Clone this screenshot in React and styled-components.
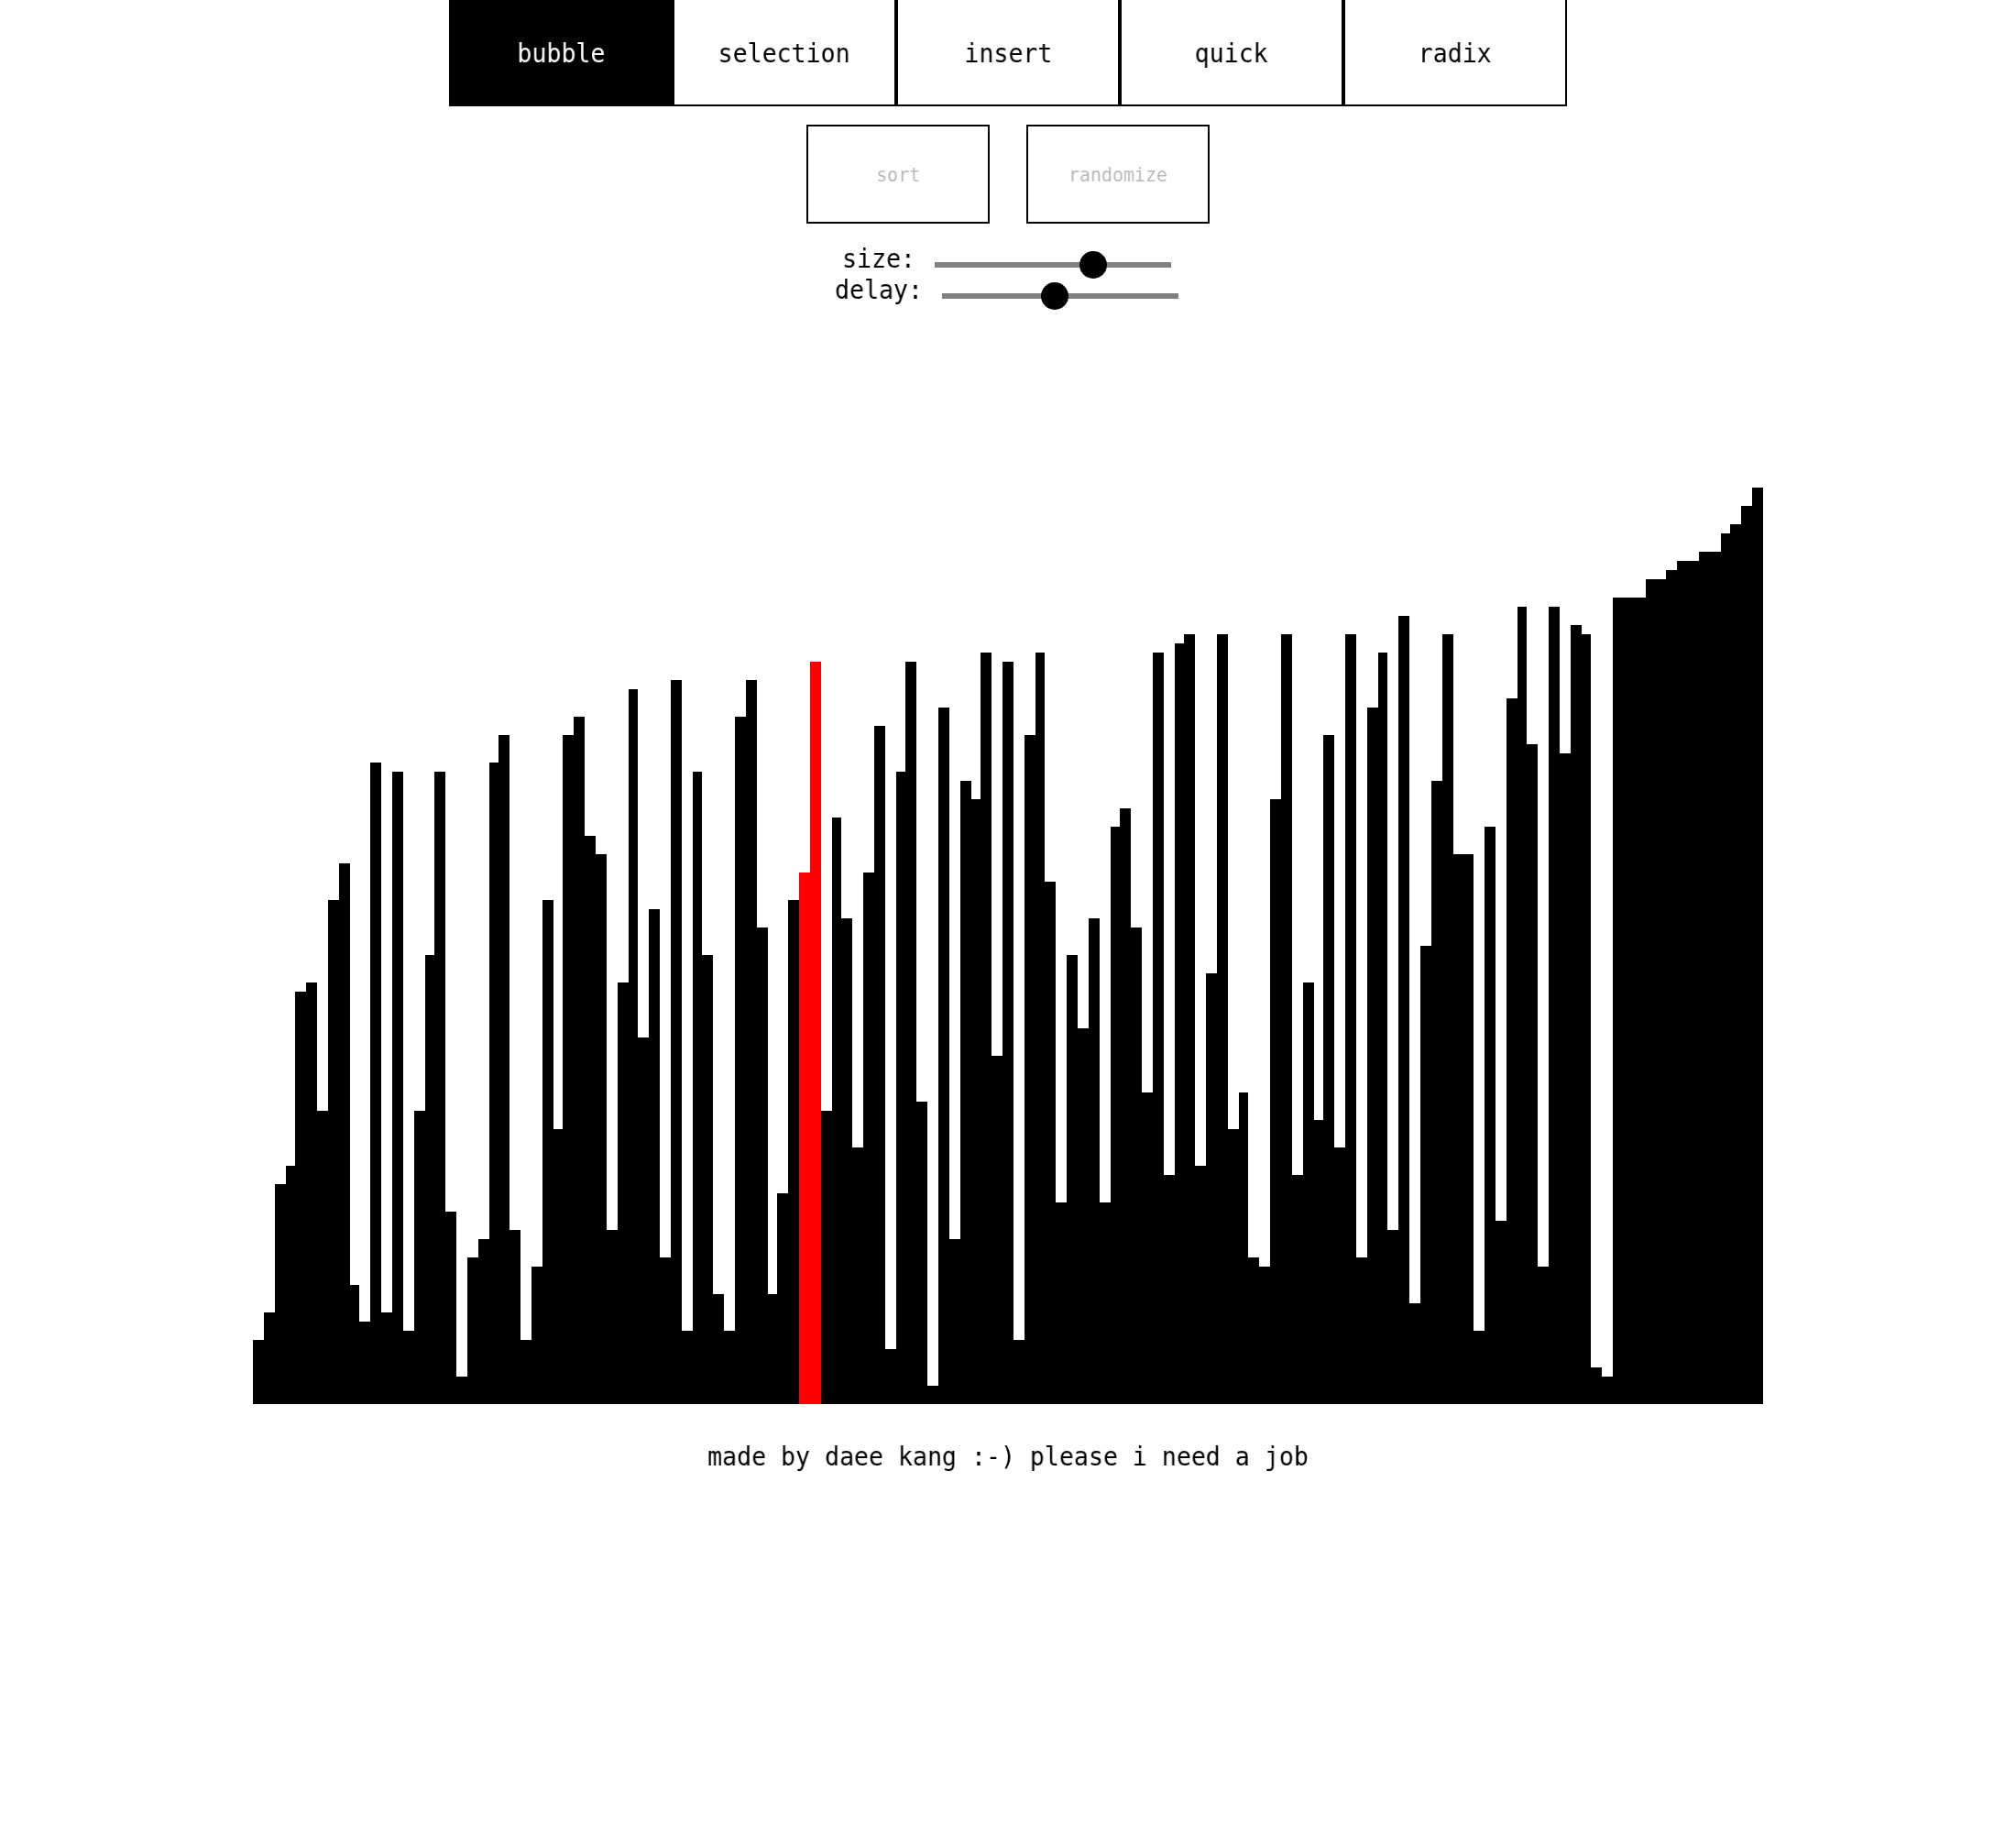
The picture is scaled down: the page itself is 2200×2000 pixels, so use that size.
import React from "react";
import styled, { createGlobalStyle } from "styled-components";

const Global = createGlobalStyle`
  html, body { margin: 0; padding: 0; background: #fff; }
  body { font-family: "DejaVu Sans Mono", "Liberation Mono", monospace; color: #000; }
`;

const Page = styled.div`
  width: 2200px;
  height: 2000px;
  display: flex;
  flex-direction: column;
  align-items: center;
`;

const Tabs = styled.nav`
  display: flex;
`;

const Narrow = styled.span`
  display: inline-block;
  white-space: nowrap;
  transform: scaleX(0.916);
  will-change: transform;
`;

const Tab = styled.button`
  width: 244px;
  height: 116px;
  box-sizing: border-box;
  border: 2px solid #000;
  border-top: none;
  border-radius: 0;
  padding: 2px 0 0;
  font: inherit;
  font-size: 29px;
  background: ${(p) => (p.$active ? "#000" : "#fff")};
  color: ${(p) => (p.$active ? "#fff" : "#000")};
`;

const Actions = styled.div`
  display: flex;
  gap: 40px;
  margin-top: 20px;
`;

const ActionButton = styled.button`
  width: 200px;
  height: 108px;
  box-sizing: border-box;
  border: 2px solid #000;
  border-radius: 0;
  padding: 1px 0 0;
  background: #fff;
  font: inherit;
  font-size: 21.75px;
  color: #b8b8b8;
`;

const Sliders = styled.div`
  display: flex;
  flex-direction: column;
  margin-top: 28px;
`;

const SliderRow = styled.label`
  display: flex;
  justify-content: center;
  align-items: center;
  gap: 20px;
  height: 34px;
  font-size: 29px;
`;

const SliderName = styled.span`
  display: block;
  width: ${(p) => p.$chars * 16}px;
  line-height: 20px;
  padding-bottom: 14px;
  white-space: nowrap;
  transform: translateX(-1px) scaleX(0.916);
  transform-origin: left center;
  will-change: transform;
`;

const Range = styled.input`
  -webkit-appearance: none;
  appearance: none;
  display: block;
  width: 258px;
  height: 30px;
  margin: 0 2px 0 0;
  padding: 0;
  background: transparent;

  &::-webkit-slider-runnable-track {
    height: 6px;
    background: #808080;
  }
  &::-webkit-slider-thumb {
    -webkit-appearance: none;
    appearance: none;
    width: 30px;
    height: 30px;
    margin-top: -12px;
    border-radius: 50%;
    background: #000;
  }
`;

const Chart = styled.div`
  display: flex;
  align-items: flex-end;
  width: 1648px;
  height: 1000px;
  margin-top: 192px;
`;

const Bar = styled.div`
  flex: none;
  background: ${(p) => (p.$active ? "#f00" : "#000")};
`;

const Footer = styled.p`
  margin: 37px 0 0;
  font-size: 29px;
  line-height: 40px;
`;

const levels = [
  7, 10, 24, 26, 45, 46, 32, 55, 59, 13, 9, 70, 10, 69, 8, 32, 49, 69, 21, 3, 16, 18, 70, 73, 19, 7, 15, 55, 30, 73, 75,
  62, 60, 19, 46, 78, 40, 54, 16, 79, 8, 69, 49, 12, 8, 75, 79, 52, 12, 23, 55,
  58, 81, 32, 64, 53, 28, 58, 74, 6, 69, 81, 33, 2, 76, 18, 68, 66, 82, 38, 81, 7, 73, 82, 57, 22, 49, 41, 53, 22, 63,
  65, 52, 34, 82, 25, 83, 84, 26, 47, 84, 30, 34, 16, 15, 66, 84,
  25, 46, 31, 73, 28, 84, 16, 76, 82, 19, 86, 11, 50, 68, 84, 60, 60, 8, 63, 20, 77, 87, 72, 15, 87, 71, 85, 84, 4, 3,
  88, 88, 88, 90, 90, 91, 92, 92, 93, 93, 95, 96, 98, 100,
];

const pitch = 1648 / levels.length;
const edge = (i) => Math.round((i * pitch) / 2) * 2;

export default function App() {
  return (
    <Page>
      <Global />
      <Tabs>
        {["bubble", "selection", "insert", "quick", "radix"].map((name, i) => (
          <Tab key={name} $active={i === 0}><Narrow>{name}</Narrow></Tab>
        ))}
      </Tabs>
      <Actions>
        <ActionButton disabled><Narrow>sort</Narrow></ActionButton>
        <ActionButton disabled><Narrow>randomize</Narrow></ActionButton>
      </Actions>
      <Sliders>
        <SliderRow>
          <SliderName $chars={5}>size:</SliderName>
          <Range type="range" min="0" max="100" step="0.1" defaultValue="69.3" />
        </SliderRow>
        <SliderRow>
          <SliderName $chars={6}>delay:</SliderName>
          <Range type="range" min="0" max="100" step="0.1" defaultValue="47.4" />
        </SliderRow>
      </Sliders>
      <Chart>
        {levels.map((level, i) => (
          <Bar
            key={i}
            $active={i === 51 || i === 52}
            style={{ width: edge(i + 1) - edge(i), height: level * 10 }}
          />
        ))}
      </Chart>
      <Footer><Narrow>made by daee kang :-) please i need a job</Narrow></Footer>
    </Page>
  );
}
